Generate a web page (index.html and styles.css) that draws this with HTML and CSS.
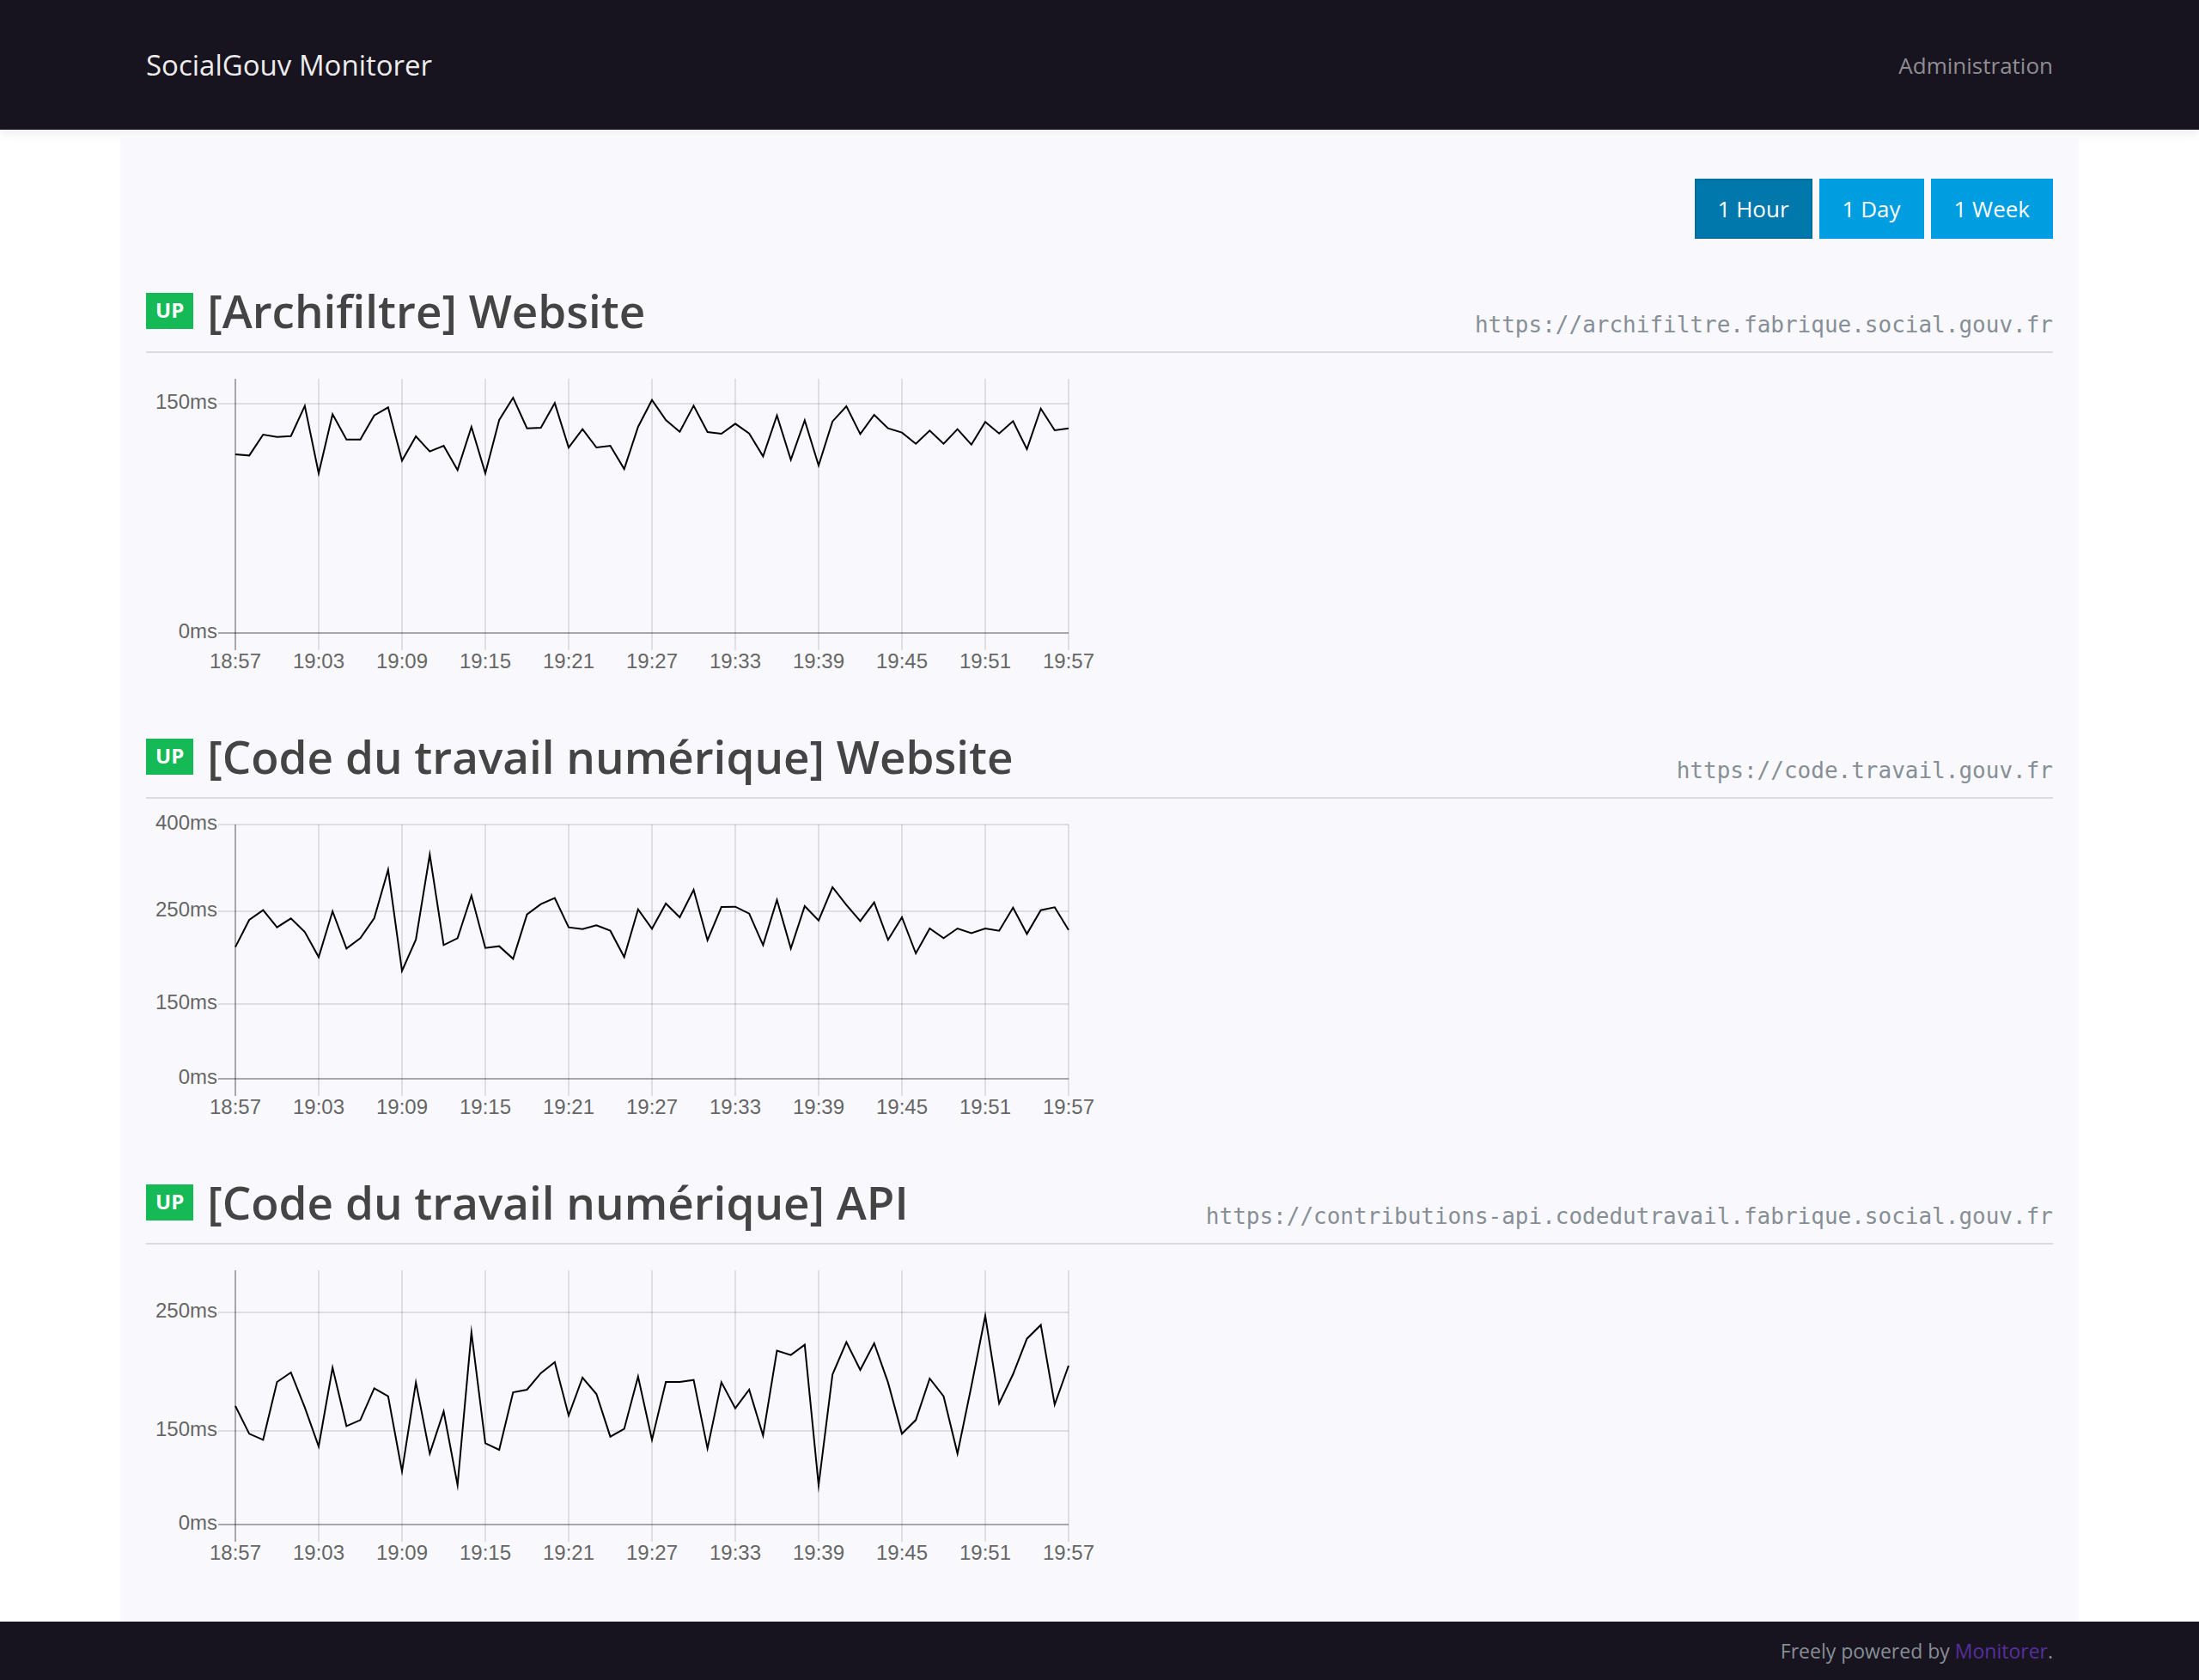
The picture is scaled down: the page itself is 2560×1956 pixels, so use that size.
FILE: index.html
```html
<!DOCTYPE html>
<html lang="en">
<head>
  <meta charset="utf-8">
  <meta name="viewport" content="width=device-width, initial-scale=1">
  <title>SocialGouv Monitorer</title>
  <link rel="stylesheet" href="styles.css">
</head>
<body>
  <header class="site-header">
    <nav class="container site-nav">
      <a class="brand" href="#">SocialGouv Monitorer</a>
      <a class="nav-link" href="#">Administration</a>
    </nav>
  </header>

  <main class="container board">
    <div class="periods">
      <button class="period is-active" type="button">1 Hour</button>
      <button class="period" type="button">1 Day</button>
      <button class="period" type="button">1 Week</button>
    </div>

    <section class="service">
      <div class="service-head">
        <span class="badge">UP</span>
        <h2 class="service-title">[Archifiltre] Website</h2>
        <a class="service-url" href="#">https://archifiltre.fabrique.social.gouv.fr</a>
      </div>
      <svg class="chart" viewBox="0 0 1110 376" data-chart="archifiltre" role="img" aria-label="Latency"></svg>
    </section>

    <section class="service">
      <div class="service-head">
        <span class="badge">UP</span>
        <h2 class="service-title">[Code du travail numérique] Website</h2>
        <a class="service-url" href="#">https://code.travail.gouv.fr</a>
      </div>
      <svg class="chart" viewBox="0 0 1110 376" data-chart="code" role="img" aria-label="Latency"></svg>
    </section>

    <section class="service">
      <div class="service-head">
        <span class="badge">UP</span>
        <h2 class="service-title">[Code du travail numérique] API</h2>
        <a class="service-url" href="#">https://contributions-api.codedutravail.fabrique.social.gouv.fr</a>
      </div>
      <svg class="chart" viewBox="0 0 1110 376" data-chart="api" role="img" aria-label="Latency"></svg>
    </section>
  </main>

  <footer class="site-footer">
    <p class="container credits">Freely powered by <a class="credits-link" href="#">Monitorer</a>.</p>
  </footer>

  <script src="charts.js"></script>
</body>
</html>
```

FILE: styles.css
```css
* {
  box-sizing: border-box;
}

body {
  display: flex;
  flex-direction: column;
  min-height: 100vh;
  margin: 0;
  background: #fff;
  color: #444;
  font-family: "Segoe UI", "Open Sans", "Noto Sans", sans-serif;
  font-size: 26px;
  line-height: 36px;
}

a {
  color: inherit;
  text-decoration: none;
}

.container {
  width: 100%;
  max-width: 2280px;
  margin: 0 auto;
  padding: 0 30px;
}

.site-header {
  background: #18141f;
  box-shadow: 0 4px 12px rgba(0, 0, 0, 0.08);
}

.site-nav {
  display: flex;
  align-items: center;
  justify-content: space-between;
  min-height: 151px;
}

.brand {
  color: #ececec;
  font-size: 33px;
}

.nav-link {
  color: #8f8d92;
}

.board {
  position: relative;
  display: flex;
  flex: 1;
  flex-direction: column;
  gap: 48px;
  margin-top: 9px;
  padding-top: 48px;
  padding-bottom: 48px;
  background: #f9f9fd;
}

.periods {
  display: flex;
  justify-content: flex-end;
  gap: 8px;
}

.period {
  padding: 17px 27px;
  border: 0;
  background: #009de0;
  color: #fff;
  font: inherit;
}

.period.is-active {
  background: #0078ab;
  box-shadow: inset 0 0 0 2px rgba(0, 0, 0, 0.08);
}

.service-head {
  display: flex;
  align-items: center;
  margin-bottom: 10px;
  padding-bottom: 12px;
  border-bottom: 2px solid #dcdcde;
}

.badge {
  padding: 2px 11px 4px;
  background: #15b956;
  color: #fff;
  font-size: 24px;
  font-weight: 700;
}

.service-title {
  margin: 0 0 0 16px;
  font-size: 53px;
  font-weight: 600;
  line-height: 71px;
}

.service-url {
  align-self: flex-end;
  margin-left: auto;
  color: #868e96;
  font-family: Consolas, "DejaVu Sans Mono", monospace;
  font-size: 26px;
  line-height: 38px;
}

.chart {
  display: block;
  width: 50%;
  overflow: visible;
}

.grid-line {
  stroke: rgba(0, 0, 0, 0.1);
  stroke-width: 2;
}

.axis-line {
  stroke: rgba(0, 0, 0, 0.25);
  stroke-width: 2;
}

.series {
  fill: none;
  stroke: #000;
  stroke-width: 2;
  stroke-miterlimit: 10;
}

.tick {
  fill: #666;
  font-family: "Liberation Sans", Arial, sans-serif;
  font-size: 24px;
}

.tick-x {
  text-anchor: middle;
}

.tick-y {
  text-anchor: end;
}

.site-footer {
  background: #18141f;
  color: #868e96;
}

.credits {
  padding-top: 16px;
  padding-bottom: 16px;
  font-size: 23px;
  text-align: right;
}

.credits-link {
  color: #552f9c;
}
```

FILE: charts.js
```js
const SVG_NS = "http://www.w3.org/2000/svg";
const PLOT = { left: 104, right: 1074, top: 20, bottom: 316 };
const TIMES = ["18:57", "19:03", "19:09", "19:15", "19:21", "19:27", "19:33", "19:39", "19:45", "19:51", "19:57"];

// One sample per minute; levels run downwards to the base level, three to a drawing unit.
const CHARTS = {
  archifiltre: {
    base: 951,
    ticks: [["150ms", 150], ["0ms", 951]],
    samples: [327, 331, 258, 266, 263, 158, 393, 187, 275, 275, 191, 163, 349, 264, 317, 297, 382, 231, 393, 207,
      129, 236, 234, 148, 303, 239, 303, 297, 378, 231, 137, 207, 248, 157, 249, 255, 220, 254, 334, 191,
      346, 208, 366, 212, 159, 256, 189, 236, 251, 290, 244, 290, 239, 293, 214, 254, 211, 309, 167, 243, 236]
  },
  code: {
    base: 1248,
    ticks: [["400ms", 360], ["250ms", 663], ["150ms", 987], ["0ms", 1248]],
    samples: [788, 693, 659, 719, 688, 735, 823, 663, 793, 757, 687, 518, 871, 762, 465, 781, 757, 608, 791, 785,
      829, 674, 638, 617, 719, 725, 712, 731, 823, 656, 724, 636, 684, 588, 764, 648, 647, 671, 781, 623,
      793, 645, 695, 579, 641, 697, 632, 763, 684, 810, 723, 757, 723, 739, 723, 731, 650, 742, 659, 649, 728]
  },
  api: {
    base: 1245,
    ticks: [["250ms", 504], ["150ms", 918], ["0ms", 1245]],
    samples: [831, 928, 949, 747, 714, 836, 972, 697, 901, 880, 769, 797, 1059, 749, 997, 850, 1107, 574, 961, 984,
      783, 774, 716, 678, 864, 732, 789, 938, 911, 728, 949, 747, 747, 740, 979, 748, 839, 774, 934, 638,
      653, 617, 1108, 721, 608, 705, 612, 749, 928, 880, 735, 797, 997, 762, 516, 822, 720, 596, 548, 826, 690]
  }
};

function add(svg, name, attributes, text) {
  const node = document.createElementNS(SVG_NS, name);
  Object.entries(attributes).forEach(([key, value]) => node.setAttribute(key, value));
  if (text) node.textContent = text;
  svg.appendChild(node);
}

function line(svg, className, x1, y1, x2, y2) {
  add(svg, "line", { class: className, x1, y1, x2, y2 });
}

function draw(svg, chart) {
  const toY = level => PLOT.bottom + (level - chart.base) / 3;
  const toX = (index, count) => PLOT.left + (PLOT.right - PLOT.left) * index / (count - 1);

  TIMES.forEach((time, index) => {
    const x = toX(index, TIMES.length);
    line(svg, "grid-line", x, PLOT.top, x, PLOT.bottom + 20);
    add(svg, "text", { class: "tick tick-x", x, y: PLOT.bottom + 41 }, time);
  });

  chart.ticks.forEach(([label, level]) => {
    const y = Math.round(toY(level));
    line(svg, "grid-line", PLOT.left - 20, y, PLOT.right, y);
    add(svg, "text", { class: "tick tick-y", x: PLOT.left - 21, y: y + 6 }, label);
  });

  line(svg, "axis-line", PLOT.left, PLOT.top, PLOT.left, PLOT.bottom + 20);
  line(svg, "axis-line", PLOT.left - 20, PLOT.bottom, PLOT.right, PLOT.bottom);

  const points = chart.samples.map((level, index) => `${toX(index, chart.samples.length)},${toY(level)}`);
  add(svg, "polyline", { class: "series", points: points.join(" ") });
}

document.querySelectorAll("[data-chart]").forEach(svg => draw(svg, CHARTS[svg.dataset.chart]));
```
